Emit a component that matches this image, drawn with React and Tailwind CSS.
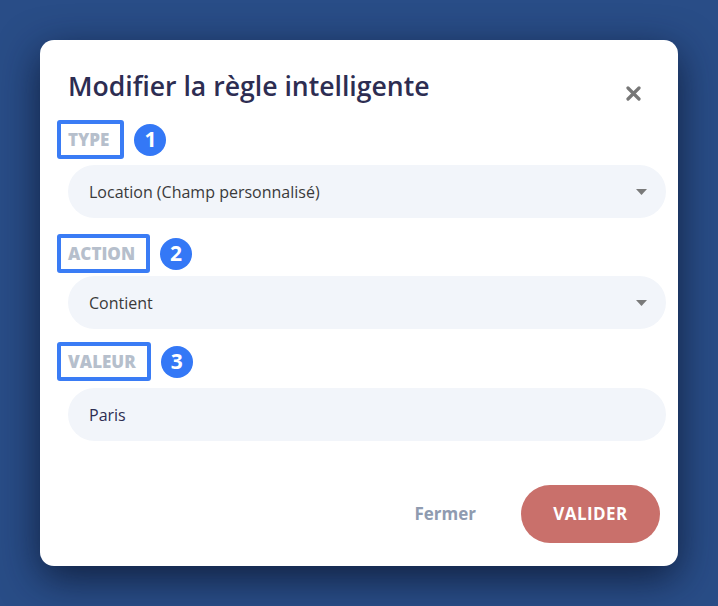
import React from 'react'

function Badge({ n }) {
  return (
    <span className="ml-[10px] flex h-8 w-8 items-center justify-center rounded-full bg-[#3478f6] text-[21px] font-bold leading-none text-white">
      {n}
    </span>
  )
}

function FieldLabel({ children, n, className }) {
  return (
    <div className={`flex items-center ${className}`}>
      <span className="rounded-[3px] border-[4px] border-[#3a7cf5] py-[4px] pr-[11px] pl-[7px] text-[17px] font-extrabold uppercase leading-[23px] text-[#b6bfcc]">
        {children}
      </span>
      <Badge n={n} />
    </div>
  )
}

function Select({ value }) {
  return (
    <div className="flex h-[53px] items-center justify-between rounded-full bg-[#f2f5fa] pr-[19px] pl-[21px] text-[16px] text-[#3a3a3a]">
      <span>{value}</span>
      <svg width="11" height="6" viewBox="0 0 11 6">
        <path d="M0 0h11L5.5 6z" fill="#7a7a7a" />
      </svg>
    </div>
  )
}

export default function App() {
  return (
    <div
      className="flex h-[606px] w-[718px] items-start justify-center bg-[#294d87] pt-10"
      style={{ fontFamily: '"Open Sans", "Noto Sans", sans-serif' }}
    >
      <div className="w-[638px] rounded-[14px] bg-white pt-[28px] pr-3 pb-[23px] pl-7 shadow-[0_12px_40px_rgba(10,20,45,0.8)]">
        <div className="flex items-center justify-between">
          <h2 className="text-[26.6px] font-semibold leading-[36px] text-[#2d2d52]">Modifier la règle intelligente</h2>
          <button className="mr-[25px] mt-[14px] text-[#777]">
            <svg width="15" height="15" viewBox="0 0 15 15">
              <path d="M2 2l11 11M13 2L2 13" stroke="#777" strokeWidth="3.2" strokeLinecap="round" />
            </svg>
          </button>
        </div>

        <FieldLabel n="1" className="-ml-[11px] mt-4 mb-[6px]">Type</FieldLabel>
        <Select value="Location (Champ personnalisé)" />

        <FieldLabel n="2" className="-ml-[11px] mt-4 mb-[3px]">Action</FieldLabel>
        <Select value="Contient" />

        <FieldLabel n="3" className="-ml-[11px] mt-[13px] mb-[7px]">Valeur</FieldLabel>
        <div className="flex h-[53px] items-center rounded-full bg-[#f2f5fa] pl-[21px] text-[16px] text-[#2d2d52]">
          Paris
        </div>

        <div className="mt-11 flex items-center justify-end gap-[45px] pr-[6px]">
          <button className="text-[17px] font-bold text-[#8f9bb0]">Fermer</button>
          <button className="h-[58px] w-[139px] rounded-full bg-[#c9706b] text-[17px] font-bold tracking-wide text-white">
            VALIDER
          </button>
        </div>
      </div>
    </div>
  )
}
